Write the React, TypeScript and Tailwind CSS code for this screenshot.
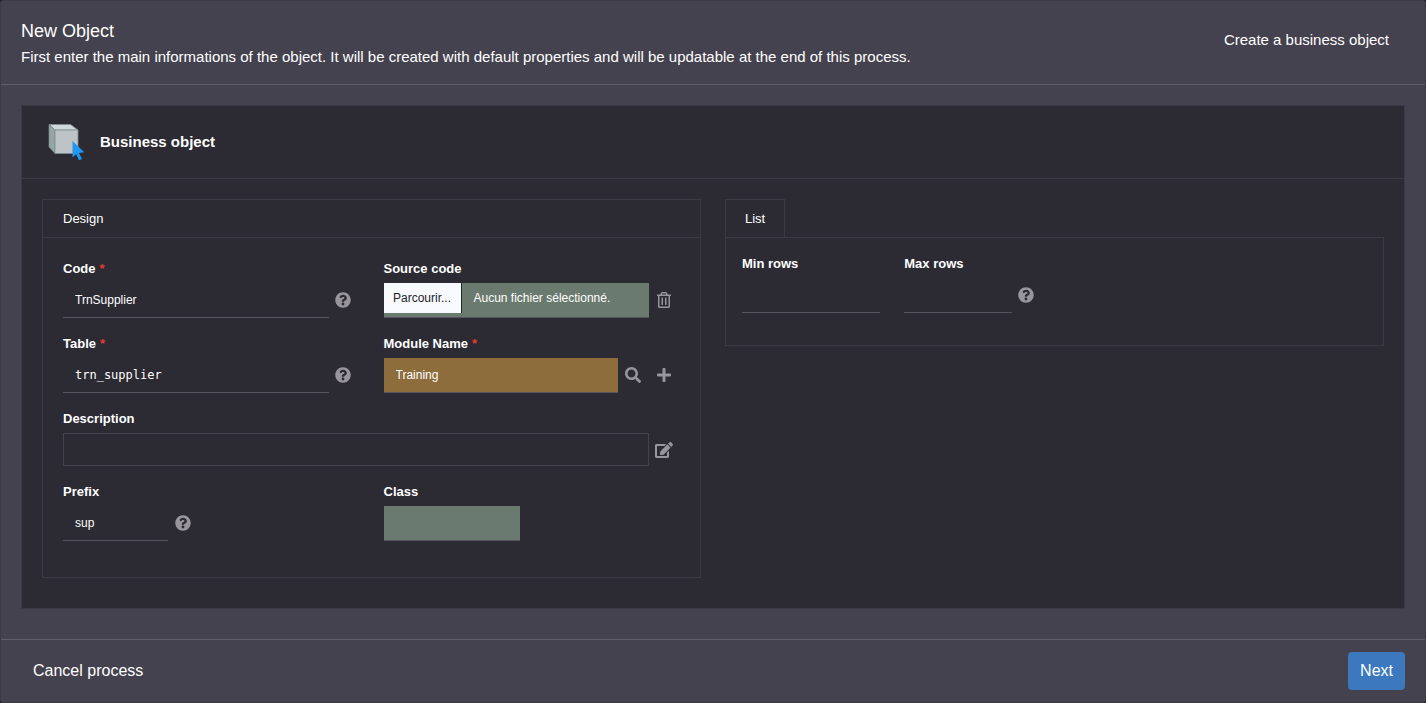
import { useState } from "react";
import type { InputHTMLAttributes, ReactNode } from "react";
import { FaEdit, FaPlus, FaQuestionCircle, FaRegTrashAlt, FaSearch } from "react-icons/fa";

function BusinessObjectIcon() {
  return (
    <svg viewBox="0 0 38 38" className="size-[38px] shrink-0" aria-hidden="true">
      <path d="M1 1.5 L22.5 1.5 L30 7 L7 7 Z" fill="#cfd8dc" stroke="#7f8c8d" strokeWidth="0.7" />
      <path d="M1 1.5 L7 7 L7 30.5 L1 24 Z" fill="#95a5a6" stroke="#7f8c8d" strokeWidth="0.7" />
      <path d="M7 7 H30 V30.5 H7 Z" fill="#bdc3c7" stroke="#7f8c8d" strokeWidth="0.8" />
      <path d="M24.5 18 L36.3 29.2 L31 30 L34 36 L31 37.3 L28.2 31.2 L24.5 34.3 Z" fill="#2196f3" />
    </svg>
  );
}

function IconButton({ label, children }: { label: string; children: ReactNode }) {
  return (
    <button
      type="button"
      aria-label={label}
      className="flex h-[33px] w-[31px] shrink-0 items-center justify-center pr-0.5 text-base text-[#98969c]"
    >
      {children}
    </button>
  );
}

function Help() {
  return (
    <IconButton label="Help">
      <FaQuestionCircle />
    </IconButton>
  );
}

type FieldProps = {
  id: string;
  label: string;
  required?: boolean;
  className?: string;
  children: ReactNode;
};

function Field({ id, label, required, className = "", children }: FieldProps) {
  return (
    <div className={`flex min-w-0 flex-col gap-1 ${className}`}>
      <label htmlFor={id} className="text-[13px] leading-5 font-bold whitespace-nowrap">
        {label}
        {required && <span className="ml-1 text-[#e53935]">*</span>}
      </label>
      <div className="flex items-start">{children}</div>
    </div>
  );
}

function TextInput({ className = "", ...props }: InputHTMLAttributes<HTMLInputElement>) {
  return (
    <input
      type="text"
      className={`h-[35px] w-full min-w-0 flex-1 border-b border-[#57545f] px-3 text-xs outline-none ${className}`}
      {...props}
    />
  );
}

function SourceFile() {
  const [name, setName] = useState("Aucun fichier sélectionné.");
  return (
    <div className="flex h-[35px] min-w-0 flex-1 items-start border-b border-[#57545f] bg-[#6a7a6e] text-xs">
      <input
        id="source"
        type="file"
        className="sr-only"
        onChange={(e) => setName(e.target.files?.[0]?.name ?? name)}
      />
      <label
        htmlFor="source"
        className="flex h-[30px] w-[78px] shrink-0 items-center justify-center border-r border-[#212529] bg-[#f8f9fc] text-[#212529]"
      >
        Parcourir...
      </label>
      <span className="flex h-[30px] items-center px-3 whitespace-nowrap">{name}</span>
    </div>
  );
}

export default function App() {
  return (
    <div className="min-h-screen bg-[#1f1d24] font-['Liberation_Sans',Arial,sans-serif] text-white">
      <form className="flex min-h-screen flex-col rounded-[3px] border border-[#3c3a45] bg-[#44424e]">
        <header className="flex items-start justify-between border-b border-[#605e66] px-5 pt-[17px] pb-[14px]">
          <div>
            <h1 className="text-lg leading-[26px]">New Object</h1>
            <p className="text-[15px] leading-[26px]">
              First enter the main informations of the object. It will be created with default
              properties and will be updatable at the end of this process.
            </p>
          </div>
          <p className="pt-[9px] pr-4 text-[15px] leading-[26px]">Create a business object</p>
        </header>

        <main className="flex-1 px-5 pt-5 pb-[30px]">
          <section className="border border-[#3d3a45] bg-[#2c2a33]">
            <div className="flex items-center gap-[14px] border-b border-[#3d3a45] px-[26px] py-[17px]">
              <BusinessObjectIcon />
              <h2 className="text-[15px] leading-6 font-bold">Business object</h2>
            </div>

            <div className="grid grid-cols-2 items-start gap-6 px-5 pt-5 pb-[30px]">
              <section className="border border-[#3d3a45]">
                <h3 className="border-b border-[#3d3a45] px-5 pt-[9px] pb-2 text-[13px] leading-5">
                  Design
                </h3>
                <div className="grid grid-cols-4 gap-x-6 gap-y-4 px-5 pt-[21px] pb-9">
                  <Field id="code" label="Code" required className="col-span-2">
                    <TextInput id="code" defaultValue="TrnSupplier" />
                    <Help />
                  </Field>
                  <Field id="source" label="Source code" className="col-span-2">
                    <SourceFile />
                    <IconButton label="Delete file">
                      <FaRegTrashAlt />
                    </IconButton>
                  </Field>
                  <Field id="table" label="Table" required className="col-span-2">
                    <TextInput
                      id="table"
                      defaultValue="trn_supplier"
                      className="font-['DejaVu_Sans_Mono',monospace]"
                    />
                    <Help />
                  </Field>
                  <Field id="module" label="Module Name" required className="col-span-2">
                    <TextInput id="module" defaultValue="Training" className="bg-[#8d6d3b]" />
                    <IconButton label="Search module">
                      <FaSearch />
                    </IconButton>
                    <IconButton label="Create module">
                      <FaPlus />
                    </IconButton>
                  </Field>
                  <Field id="description" label="Description" className="col-span-4">
                    <textarea
                      id="description"
                      rows={1}
                      className="h-[33px] min-w-0 flex-1 resize-none border border-[#45424e] px-3 py-2 text-xs outline-none"
                    />
                    <IconButton label="Edit description">
                      <FaEdit className="h-4 w-[18px]" />
                    </IconButton>
                  </Field>
                  <Field id="prefix" label="Prefix">
                    <TextInput id="prefix" defaultValue="sup" />
                    <Help />
                  </Field>
                  <Field id="class" label="Class" className="col-start-3">
                    <TextInput id="class" className="bg-[#6a7a6e]" />
                  </Field>
                </div>
              </section>

              <section>
                <div role="tablist" className="flex">
                  <button
                    type="button"
                    role="tab"
                    aria-selected="true"
                    className="border border-b-0 border-[#3d3a45] px-[19px] pt-[9px] pb-2 text-[13px] leading-5"
                  >
                    List
                  </button>
                </div>
                <div
                  role="tabpanel"
                  className="grid grid-cols-4 gap-x-6 border border-[#3d3a45] px-4 pt-4 pb-8"
                >
                  <Field id="min" label="Min rows">
                    <TextInput id="min" />
                  </Field>
                  <Field id="max" label="Max rows">
                    <TextInput id="max" />
                    <Help />
                  </Field>
                </div>
              </section>
            </div>
          </section>
        </main>

        <footer className="flex items-center justify-between border-t border-[#605e66] px-5 py-3">
          <button type="button" className="px-3 text-base leading-[38px]">
            Cancel process
          </button>
          <button type="submit" className="rounded bg-[#3c78bd] px-3 text-base leading-[38px]">
            Next
          </button>
        </footer>
      </form>
    </div>
  );
}
